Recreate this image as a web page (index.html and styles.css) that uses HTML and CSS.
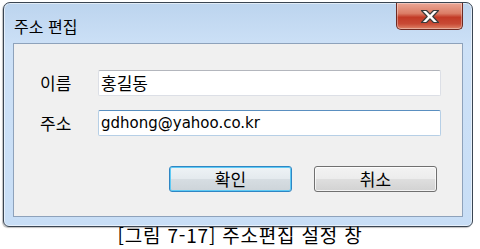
FILE: index.html
```html
<!DOCTYPE html>
<html lang="ko">
<head>
<meta charset="utf-8">
<link rel="stylesheet" href="styles.css">
</head>
<body>
<div class="page">
  <div class="window">
    <div class="titlebar">
      <span class="title">주소 편집</span>
      <div class="close">
        <svg width="20" height="15" viewBox="0 0 20 15">
          <path d="M1.5 1.5 H6.5 L10 5.2 L13.5 1.5 H18.5 L12.8 7.5 L18.5 13.5 H13.5 L10 9.8 L6.5 13.5 H1.5 L7.2 7.5 Z" fill="#ffffff" stroke="#3b3b3b" stroke-width="1.2" stroke-linejoin="round"/>
        </svg>
      </div>
    </div>
    <div class="client">
      <div class="row">
        <span class="label">이름</span>
        <div class="input input-ko">홍길동</div>
      </div>
      <div class="row row-second">
        <span class="label">주소</span>
        <div class="input input-focus">gdhong@yahoo.co.kr</div>
      </div>
      <div class="buttons">
        <div class="btn btn-default">확인</div>
        <div class="btn">취소</div>
      </div>
    </div>
  </div>
  <div class="caption">[그림 7-17] 주소편집 설정 창</div>
</div>
</body>
</html>
```
FILE: styles.css
```css
html, body {
  margin: 0;
  padding: 0;
  background: #ffffff;
}
body {
  font-family: "DejaVu Sans", "Noto Sans CJK KR", sans-serif;
  color: #000;
}
.page {
  width: 480px;
  height: 249px;
  padding: 2px 0 0 3px;
  box-sizing: border-box;
  display: flex;
  flex-direction: column;
  overflow: hidden;
}
.window {
  width: 470px;
  height: 225px;
  flex: none;
  box-sizing: border-box;
  border: 1px solid #3a4552;
  border-radius: 7px 7px 6px 6px;
  background: linear-gradient(to bottom, #bcd4ee 0%, #cde1f7 20%, #c8def6 100%);
  padding: 0 9px 9px 9px;
  display: flex;
  flex-direction: column;
  box-shadow: inset 0 0 0 1px rgba(255,255,255,0.55), -1px 1px 1px rgba(0,0,0,0.25);
}
.titlebar {
  height: 40px;
  flex: none;
  display: flex;
  justify-content: space-between;
  align-items: flex-start;
}
.title {
  font-family: "Noto Sans CJK KR", sans-serif;
  font-size: 16px;
  line-height: 20px;
  padding: 13px 0 0 1px;
  color: #000;
}
.close {
  width: 67px;
  height: 27px;
  box-sizing: border-box;
  border: 1px solid #6e2a22;
  border-top: none;
  border-radius: 0 0 5px 5px;
  background: linear-gradient(to bottom, #eba796 0%, #db7d66 40%, #c23a26 55%, #c84a35 80%, #de8468 100%);
  box-shadow: inset 0 0 0 1px rgba(255,255,255,0.35);
  display: flex;
  align-items: center;
  justify-content: center;
}
.close svg {
  display: block;
}
.client {
  flex: 1;
  border: 1px solid #8ea2bb;
  background: #f0f0f0;
  padding: 26px 21px 24px 26px;
  display: flex;
  flex-direction: column;
}
.row {
  display: flex;
  align-items: center;
  height: 26px;
}
.row-second {
  margin-top: 14px;
}
.label {
  width: 58px;
  flex: none;
  font-family: "Noto Sans CJK KR", sans-serif;
  font-size: 17px;
  line-height: 20px;
}
.input {
  flex: 1;
  height: 26px;
  box-sizing: border-box;
  background: #ffffff;
  border: 1px solid #dcdfe6;
  border-top-color: #b3b6bd;
  border-radius: 2px;
  padding: 0 0 0 2px;
  font-size: 15px;
  line-height: 24px;
  white-space: nowrap;
  overflow: hidden;
}
.input-ko {
  font-family: "Noto Sans CJK KR", sans-serif;
  font-size: 17px;
}
.input-focus {
  border-color: #b6cfe6;
  border-top-color: #5a8fc0;
}
.buttons {
  margin-top: 30px;
  display: flex;
  justify-content: flex-end;
  gap: 22px;
  padding-right: 4px;
}
.btn {
  width: 123px;
  height: 26px;
  box-sizing: border-box;
  border: 1px solid #707070;
  border-radius: 3px;
  background: linear-gradient(to bottom, #f3f3f3 0%, #ececec 48%, #dedede 52%, #d2d2d2 100%);
  box-shadow: inset 0 0 0 1px rgba(255,255,255,0.7);
  font-family: "Noto Sans CJK KR", sans-serif;
  font-size: 17px;
  line-height: 23px;
  text-align: center;
}
.btn-default {
  border-color: #2f86c4;
  box-shadow: inset 0 0 0 1px #5fcaf4;
  background: linear-gradient(to bottom, #eef3f6 0%, #e4eaee 48%, #d6dde2 52%, #cdd4d9 100%);
}
.caption {
  font-family: "Noto Sans CJK KR", sans-serif;
  font-size: 19px;
  line-height: 19px;
  margin-top: -2px;
  letter-spacing: 0.8px;
  text-align: center;
  width: 474px;
  color: #000;
}
```
